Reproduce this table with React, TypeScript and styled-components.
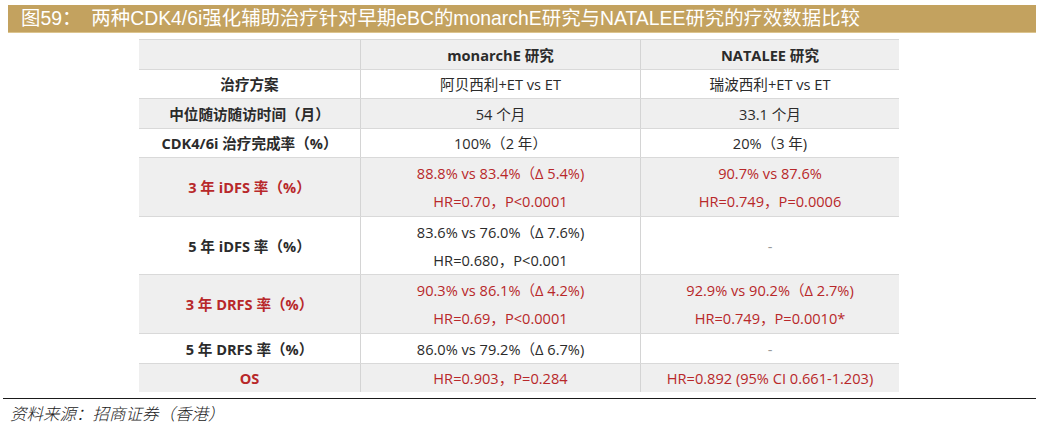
import React from "react";
import styled, { createGlobalStyle } from "styled-components";

const GlobalStyle = createGlobalStyle`
  html, body { margin: 0; padding: 0; background: #ffffff; }
  body { font-family: "Liberation Sans", "Noto Sans CJK SC", sans-serif; }
`;

const Page = styled.div`
  width: 1042px;
  height: 426px;
  padding-top: 5px;
  box-sizing: border-box;
  display: flex;
  flex-direction: column;
  overflow: hidden;
`;

const TitleBar = styled.div`
  margin-left: 8px;
  width: 1028px;
  height: 28px;
  box-sizing: border-box;
  background: #c3a25f;
  border-bottom: 1px solid #dcc48e;
  color: #ffffff;
  font-family: "Liberation Sans", "Noto Sans CJK SC", sans-serif;
  font-size: 19.4px;
  font-weight: 400;
  line-height: 27px;
  padding-left: 13px;
  white-space: nowrap;
  display: flex;
  gap: 10px;
`;

const Table = styled.div`
  margin-top: 6px;
  margin-left: 139px;
  width: 760px;
  display: flex;
  flex-direction: column;
  font-family: "Open Sans", "Noto Sans CJK SC", sans-serif;
  font-size: 14.6px;
  color: #2b2b2b;
`;

const Row = styled.div<{ $h: number; $shade: boolean }>`
  display: grid;
  grid-template-columns: 221px 280px 259px;
  height: ${(p) => p.$h}px;
  background: ${(p) => (p.$shade ? "#efefef" : "#ffffff")};
  border-top: 1px solid #d9d9d9;
  box-sizing: border-box;
`;

const Cell = styled.div<{ $red?: boolean; $bold?: boolean; $first?: boolean }>`
  display: flex;
  flex-direction: column;
  align-items: center;
  justify-content: center;
  text-align: center;
  white-space: nowrap;
  border-left: ${(p) => (p.$first ? "none" : "1px solid #d4d4d4")};
  color: ${(p) => (p.$red ? "#b8282a" : "#2b2b2b")};
  font-weight: ${(p) => (p.$bold ? 700 : 400)};
  line-height: 28px;
`;

const Dash = styled.span`
  color: #9a9a9a;
`;

const Rule = styled.div`
  margin-top: 6px;
  margin-left: 3px;
  width: 1033px;
  border-top: 1px solid #1a1a1a;
`;

const Source = styled.div`
  margin-top: 4px;
  padding-left: 10px;
  font-family: "Noto Sans CJK SC", sans-serif;
  font-style: italic;
  font-size: 16.5px;
  font-weight: 300;
  color: #222222;
  line-height: 20px;
`;

type RowData = {
  label: string;
  red?: boolean;
  h: number;
  a: string[];
  b: string[];
};

const rows: RowData[] = [
  { label: "治疗方案", h: 29, a: ["阿贝西利+ET vs ET"], b: ["瑞波西利+ET vs ET"] },
  { label: "中位随访随访时间（月）", h: 30, a: ["54 个月"], b: ["33.1 个月"] },
  { label: "CDK4/6i 治疗完成率（%）", h: 29, a: ["100%（2 年）"], b: ["20%（3 年)"] },
  {
    label: "3 年 iDFS 率（%）",
    red: true,
    h: 59,
    a: ["88.8% vs 83.4%（Δ 5.4%)", "HR=0.70，P<0.0001"],
    b: ["90.7% vs 87.6%", "HR=0.749，P=0.0006"],
  },
  {
    label: "5 年 iDFS 率（%）",
    h: 58,
    a: ["83.6% vs 76.0%（Δ 7.6%)", "HR=0.680，P<0.001"],
    b: ["-"],
  },
  {
    label: "3 年 DRFS 率（%）",
    red: true,
    h: 59,
    a: ["90.3% vs 86.1%（Δ 4.2%)", "HR=0.69，P<0.0001"],
    b: ["92.9% vs 90.2%（Δ 2.7%)", "HR=0.749，P=0.0010*"],
  },
  { label: "5 年 DRFS 率（%）", h: 30, a: ["86.0% vs 79.2%（Δ 6.7%)"], b: ["-"] },
  {
    label: "OS",
    red: true,
    h: 29,
    a: ["HR=0.903，P=0.284"],
    b: ["HR=0.892 (95% CI 0.661-1.203)"],
  },
];

const Lines: React.FC<{ lines: string[] }> = ({ lines }) => (
  <>
    {lines.map((l, i) => (l === "-" ? <Dash key={i}>-</Dash> : <span key={i}>{l}</span>))}
  </>
);

export default function App() {
  return (
    <>
      <GlobalStyle />
      <Page>
        <TitleBar>
          <span>图59：</span>
          <span>两种CDK4/6i强化辅助治疗针对早期eBC的monarchE研究与NATALEE研究的疗效数据比较</span>
        </TitleBar>
        <Table>
          <Row $h={30} $shade={true}>
            <Cell $first />
            <Cell $bold>monarchE 研究</Cell>
            <Cell $bold>NATALEE 研究</Cell>
          </Row>
          {rows.map((r, i) => (
            <Row key={r.label} $h={r.h} $shade={i % 2 === 1}>
              <Cell $first $bold $red={r.red}>
                {r.label}
              </Cell>
              <Cell $red={r.red}>
                <Lines lines={r.a} />
              </Cell>
              <Cell $red={r.red}>
                <Lines lines={r.b} />
              </Cell>
            </Row>
          ))}
        </Table>
        <Rule />
        <Source>资料来源：招商证券（香港）</Source>
      </Page>
    </>
  );
}
